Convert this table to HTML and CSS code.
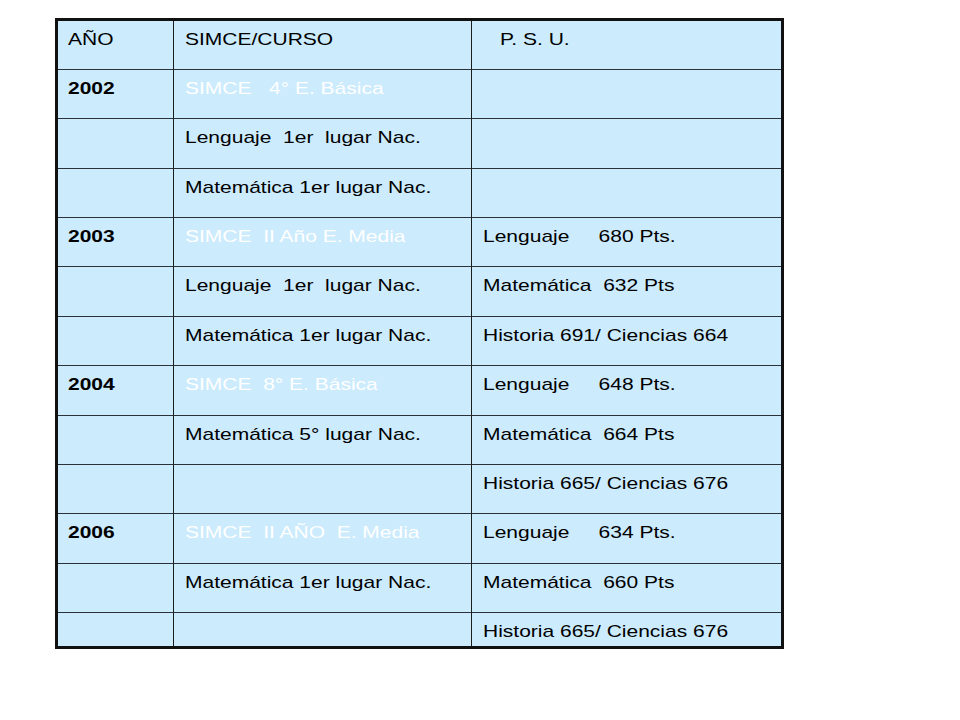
FILE: index.html
```html
<!DOCTYPE html>
<html lang="es">
<head>
<meta charset="utf-8">
<title>SIMCE / PSU</title>
<link rel="stylesheet" href="styles.css">
</head>
<body>
<div class="grid">
  <div class="c c1"><span class="t">AÑO</span></div><div class="c c2"><span class="t">SIMCE/CURSO</span></div><div class="c c3 psu"><span class="t">P. S. U.</span></div>
  <div class="c c1 b"><span class="t">2002</span></div><div class="c c2 w"><span class="t">SIMCE   4° E. Básica</span></div><div class="c c3"></div>
  <div class="c c1"></div><div class="c c2"><span class="t">Lenguaje  1er  lugar Nac.</span></div><div class="c c3"></div>
  <div class="c c1"></div><div class="c c2"><span class="t">Matemática 1er lugar Nac.</span></div><div class="c c3"></div>
  <div class="c c1 b"><span class="t">2003</span></div><div class="c c2 w"><span class="t">SIMCE  II Año E. Media</span></div><div class="c c3"><span class="t">Lenguaje     680 Pts.</span></div>
  <div class="c c1"></div><div class="c c2"><span class="t">Lenguaje  1er  lugar Nac.</span></div><div class="c c3"><span class="t">Matemática  632 Pts</span></div>
  <div class="c c1"></div><div class="c c2"><span class="t">Matemática 1er lugar Nac.</span></div><div class="c c3"><span class="t">Historia 691/ Ciencias 664</span></div>
  <div class="c c1 b"><span class="t">2004</span></div><div class="c c2 w"><span class="t">SIMCE  8° E. Básica</span></div><div class="c c3"><span class="t">Lenguaje     648 Pts.</span></div>
  <div class="c c1"></div><div class="c c2"><span class="t">Matemática 5° lugar Nac.</span></div><div class="c c3"><span class="t">Matemática  664 Pts</span></div>
  <div class="c c1"></div><div class="c c2"></div><div class="c c3"><span class="t">Historia 665/ Ciencias 676</span></div>
  <div class="c c1 b"><span class="t">2006</span></div><div class="c c2 w"><span class="t">SIMCE  II AÑO  E. Media</span></div><div class="c c3"><span class="t">Lenguaje     634 Pts.</span></div>
  <div class="c c1"></div><div class="c c2"><span class="t">Matemática 1er lugar Nac.</span></div><div class="c c3"><span class="t">Matemática  660 Pts</span></div>
  <div class="c c1 last"></div><div class="c c2 last"></div><div class="c c3 last"><span class="t">Historia 665/ Ciencias 676</span></div>
</div>
</body>
</html>
```
FILE: styles.css
```css
html, body {
  margin: 0;
  padding: 0;
  background: #ffffff;
}
body {
  font-family: "Liberation Sans", Arial, sans-serif;
  font-size: 17px;
  color: #000000;
}
.grid {
  margin: 18px 0 0 55px;
  width: 723px;
  border: 3px solid #111111;
  background: #ccebfd;
  display: grid;
  grid-template-columns: 116px 298px 1fr;
  grid-template-rows: 49px 49px 50px 49px 49px 50px 49px 50px 49px 49px 50px 49px 33px;
}
.c {
  box-sizing: border-box;
  border-bottom: 1px solid #2a3138;
  padding: 9px 0 0 10px;
  white-space: pre;
  line-height: 19px;
  overflow: visible;
}
.t {
  display: inline-block;
  transform: scaleX(1.235);
  transform-origin: left center;
}
.c1, .c2 {
  border-right: 1px solid #1c1c1c;
}
.c2, .c3 {
  padding-left: 11px;
}
.last {
  border-bottom: none;
}
.b {
  font-weight: bold;
}
.w {
  color: #ffffff;
}
.psu {
  padding-left: 28px;
}
```
